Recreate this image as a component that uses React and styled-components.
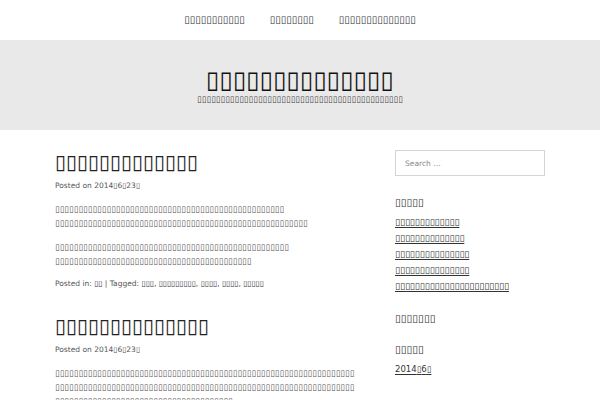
import React from 'react';
import styled, { createGlobalStyle } from 'styled-components';

const GlobalStyle = createGlobalStyle`
  body {
    margin: 0;
    background: #fff;
    font-family: "DejaVu Sans", "Liberation Sans", sans-serif;
    color: #404040;
  }
  a { color: inherit; text-decoration: none; }
`;

// the page's Japanese text shows as missing-glyph boxes in the reference
const box = n => '\u25AF'.repeat(n);

const TopNav = styled.nav`
  height: 40px;
  display: flex;
  align-items: center;
  justify-content: center;
  gap: 25px;
  font-size: 10px;
  color: #333;
`;

const NavItem = styled.a`
  line-height: 14px;
`;

const Masthead = styled.header`
  height: 90px;
  background: #e9e9e9;
  display: flex;
  flex-direction: column;
  align-items: center;
  padding-top: 26px;
  box-sizing: border-box;
`;

const SiteTitle = styled.h1`
  margin: 0;
  font-size: 24.4px;
  line-height: 28px;
  font-weight: bold;
  color: #111;
`;

const SiteDescription = styled.p`
  margin: 0;
  font-size: 8.5px;
  line-height: 10px;
  color: #444;
`;

const Container = styled.div`
  width: 490px;
  margin: 0 auto;
  padding-top: 20px;
  display: flex;
  justify-content: space-between;
  align-items: flex-start;
`;

const Main = styled.main`
  width: 302px;
`;

const Article = styled.article`
  margin-bottom: 23px;
`;

const EntryTitle = styled.h2`
  margin: 0 0 4px;
  font-size: 20px;
  line-height: 25px;
  font-weight: normal;
  color: #222;
  white-space: nowrap;
`;

const EntryMeta = styled.div`
  font-size: 7.5px;
  line-height: 14px;
  color: #555;
`;

const Content = styled.div`
  margin-top: 8.5px;
`;

const Para = styled.p`
  margin: 0 0 10px;
  font-size: 8.5px;
  line-height: 14px;
  color: #555;
  word-break: break-all;
`;

const EntryFooter = styled.footer`
  margin-top: -0.5px;
  font-size: 7.5px;
  line-height: 14px;
  color: #555;
`;

const TagLink = styled.a`
  color: #333;
`;

const Sidebar = styled.aside`
  width: 150px;
`;

const SearchField = styled.input`
  display: block;
  width: 150px;
  height: 26px;
  box-sizing: border-box;
  border: 1px solid #d4d4d4;
  padding: 0 0 0 9px;
  font-family: "DejaVu Sans", sans-serif;
  font-size: 7.5px;
  color: #666;
  outline: none;
  &::placeholder { color: #888; }
`;

const Widget = styled.section`
  margin-top: ${p => p.top}px;
`;

const WidgetTitle = styled.h3`
  margin: 0;
  font-size: 10.5px;
  line-height: 14px;
  font-weight: normal;
  color: #333;
`;

const LinkList = styled.ul`
  list-style: none;
  margin: 4.5px 0 0;
  padding: 0;
`;

const LinkItem = styled.li`
  font-size: ${p => p.size || 9}px;
  line-height: 16px;
  white-space: nowrap;
  a {
    color: #333;
    text-decoration: underline;
    text-decoration-thickness: 1px;
    text-underline-offset: 1.5px;
  }
`;

const navItems = [box(11), box(8), box(14)];
const recentPosts = [13, 14, 15, 15, 23];

const PostHeader = ({ title }) => (
  <>
    <EntryTitle>{title}</EntryTitle>
    <EntryMeta>
      Posted on <a href="#">2014{box(1)}6{box(1)}23{box(1)}</a>
    </EntryMeta>
  </>
);

export default function App() {
  return (
    <>
      <GlobalStyle />
      <TopNav>
        {navItems.map((t, i) => (
          <NavItem key={i} href="#">{t}</NavItem>
        ))}
      </TopNav>
      <Masthead>
        <SiteTitle>{box(14)}</SiteTitle>
        <SiteDescription>{box(44)}</SiteDescription>
      </Masthead>
      <Container>
        <Main>
          <Article>
            <PostHeader title={box(13)} />
            <Content>
              <Para>
                {box(49)}
                <br />
                {box(54)}
              </Para>
              <Para>
                {box(50)}
                <br />
                {box(42)}
              </Para>
            </Content>
            <EntryFooter>
              Posted in: <TagLink href="#">{box(2)}</TagLink> | Tagged:{' '}
              <TagLink href="#">{box(3)}</TagLink>,{' '}
              <TagLink href="#">{box(9)}</TagLink>,{' '}
              <TagLink href="#">{box(4)}</TagLink>,{' '}
              <TagLink href="#">{box(4)}</TagLink>,{' '}
              <TagLink href="#">{box(5)}</TagLink>
            </EntryFooter>
          </Article>
          <Article>
            <PostHeader title={box(14)} />
            <Content>
              <Para>{box(166)}</Para>
            </Content>
          </Article>
        </Main>
        <Sidebar>
          <SearchField type="search" placeholder="Search …" />
          <Widget top={19}>
            <WidgetTitle>{box(5)}</WidgetTitle>
            <LinkList>
              {recentPosts.map((n, i) => (
                <LinkItem key={i}>
                  <a href="#">{box(n)}</a>
                </LinkItem>
              ))}
            </LinkList>
          </Widget>
          <Widget top={17.5}>
            <WidgetTitle>{box(7)}</WidgetTitle>
          </Widget>
          <Widget top={17}>
            <WidgetTitle>{box(5)}</WidgetTitle>
            <LinkList>
              <LinkItem size={8.5}>
                <a href="#">2014{box(1)}6{box(1)}</a>
              </LinkItem>
            </LinkList>
          </Widget>
        </Sidebar>
      </Container>
    </>
  );
}
